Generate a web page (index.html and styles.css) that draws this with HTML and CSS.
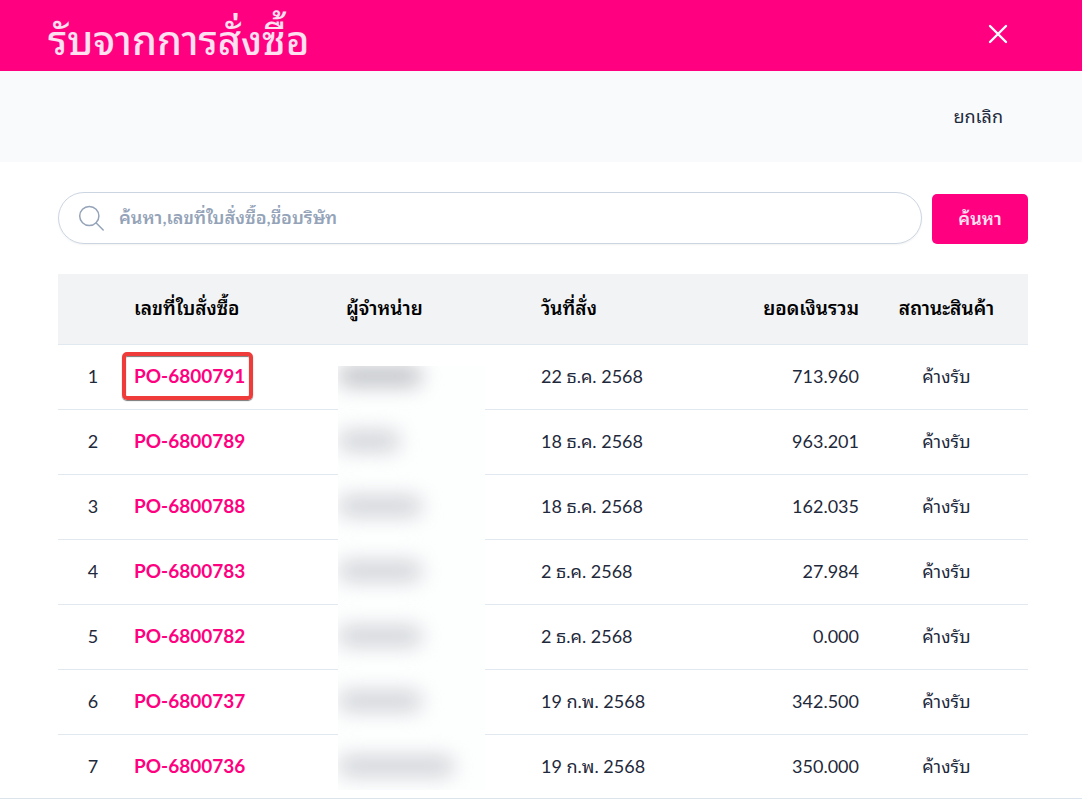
FILE: index.html
```
<!DOCTYPE html>
<html lang="th">
<head>
<meta charset="utf-8">
<title>รับจากการสั่งซื้อ</title>
<link rel="stylesheet" href="styles.css">
</head>
<body>
<div class="dialog">
<header class="titlebar">
  <h1 class="title">รับจากการสั่งซื้อ</h1>
  <button class="close" type="button" aria-label="ปิด"><svg width="20" height="20" viewBox="0 0 20 20" fill="none" stroke="currentColor" stroke-width="2.4" stroke-linecap="round"><path d="M2 2l16 16M18 2L2 18"/></svg></button>
</header>
<div class="actions"><button class="cancel" type="button">ยกเลิก</button></div>
<main class="content">
  <form class="search">
    <label class="search-box">
      <svg width="28" height="28" viewBox="0 0 28 28" fill="none" stroke="currentColor" stroke-width="1.5" stroke-linecap="round"><circle cx="11.3" cy="12" r="9.6"/><path d="M18.2 19l7 7"/></svg>
      <input class="search-input" type="text" aria-label="ค้นหา" placeholder="ค้นหา,เลขที่ใบสั่งซื้อ,ชื่อบริษัท">
    </label>
    <button class="search-button" type="button">ค้นหา</button>
  </form>
  <div class="orders-wrap">
    <table class="orders">
      <thead><tr><th class="num"></th><th class="code">เลขที่ใบสั่งซื้อ</th><th class="vendor">ผู้จำหน่าย</th><th class="date">วันที่สั่ง</th><th class="total">ยอดเงินรวม</th><th class="status">สถานะสินค้า</th></tr></thead>
      <tbody>
        <tr><td class="num">1</td><td><a class="po marked" href="#">PO-6800791</a></td><td></td><td>22 ธ.ค. 2568</td><td class="total">713.960</td><td class="status">ค้างรับ</td></tr>
        <tr><td class="num">2</td><td><a class="po" href="#">PO-6800789</a></td><td></td><td>18 ธ.ค. 2568</td><td class="total">963.201</td><td class="status">ค้างรับ</td></tr>
        <tr><td class="num">3</td><td><a class="po" href="#">PO-6800788</a></td><td></td><td>18 ธ.ค. 2568</td><td class="total">162.035</td><td class="status">ค้างรับ</td></tr>
        <tr><td class="num">4</td><td><a class="po" href="#">PO-6800783</a></td><td></td><td>2 ธ.ค. 2568</td><td class="total">27.984</td><td class="status">ค้างรับ</td></tr>
        <tr><td class="num">5</td><td><a class="po" href="#">PO-6800782</a></td><td></td><td>2 ธ.ค. 2568</td><td class="total">0.000</td><td class="status">ค้างรับ</td></tr>
        <tr><td class="num">6</td><td><a class="po" href="#">PO-6800737</a></td><td></td><td>19 ก.พ. 2568</td><td class="total">342.500</td><td class="status">ค้างรับ</td></tr>
        <tr><td class="num">7</td><td><a class="po" href="#">PO-6800736</a></td><td></td><td>19 ก.พ. 2568</td><td class="total">350.000</td><td class="status">ค้างรับ</td></tr>
      </tbody>
    </table>
    <div class="redaction" aria-hidden="true">
      <span class="smudge first"></span><span class="smudge short"></span><span class="smudge"></span><span class="smudge"></span><span class="smudge"></span><span class="smudge"></span><span class="smudge long"></span>
    </div>
  </div>
</main>
<footer class="footer"></footer>
</div>
</body>
</html>
```
FILE: styles.css
```
* { box-sizing: border-box; }
body {
  margin: 0;
  background: #fff;
  color: #1e293b;
  font: 18px/24px Lato, "Noto Sans Thai Looped", Loma, Waree, "Noto Sans Thai", "Noto Sans", sans-serif;
}
button, input { font: inherit; }
button { border: 0; padding: 0; background: none; cursor: pointer; }
.dialog { display: flex; flex-direction: column; height: 100vh; overflow: hidden; }
.titlebar {
  flex: none;
  display: flex;
  justify-content: space-between;
  height: 71px;
  padding: 0 74px 0 48px;
  background: #ff0080;
  color: #ffe0f0;
}
.title { margin: 0; padding-top: 13px; font-size: 40px; font-weight: 500; line-height: 54px; }
.close { width: 20px; height: 20px; margin-top: 24px; color: #fff; }
.close svg { display: block; }
.actions {
  flex: none;
  display: flex;
  align-items: center;
  justify-content: flex-end;
  height: 91px;
  padding: 0 79px 2px 0;
  background: #f8fafc;
}
.cancel { color: inherit; }
.content { flex: 1; min-height: 0; overflow: hidden; padding: 30px 54px 0 58px; }
.search { display: flex; align-items: flex-end; gap: 10px; margin-bottom: 30px; }
.search-box {
  flex: 1;
  display: flex;
  align-items: center;
  gap: 13px;
  height: 52px;
  padding: 0 20px 0 19px;
  border: 1px solid #cbd5e1;
  border-radius: 26px;
  box-shadow: 0 1px 2px #0000000d;
  color: #94a3b8;
}
.search-input { flex: 1; border: 0; outline: 0; padding: 0 0 2px; background: none; font-weight: 600; }
.search-input::placeholder { color: #94a3b8; opacity: 1; }
.search-button {
  width: 96px;
  height: 50px;
  padding-bottom: 2px;
  border-radius: 5px;
  background: #ff0080;
  color: #ffe0f0;
  font-weight: 600;
}
.orders-wrap { position: relative; }
.orders { width: 100%; border-collapse: separate; border-spacing: 0; table-layout: fixed; }
th, td { padding: 0 18px 2px; border-bottom: 1px solid #e2e8f0; text-align: left; white-space: nowrap; }
th { height: 71px; background: #f1f3f5; color: #000; font-size: 19px; font-weight: 600; }
td { height: 65px; }
.num { width: 58px; padding: 0 0 2px 12px; text-align: center; }
.code { width: 212px; }
.vendor { width: 195px; }
.total { text-align: right; }
th.status { width: 151px; }
.status { padding: 0 12px 2px 0; text-align: center; }
.po { color: #ff0080; font-size: 19px; font-weight: 700; text-decoration: none; }
.marked {
  display: inline-block;
  margin: 0 -12px;
  padding: 8px 4px 8px 8px;
  border: 4px solid #f03b3b;
  border-radius: 5px;
  box-shadow: 0 1px 1px #777, inset 0 1px 1px #777;
}
.redaction {
  position: absolute;
  top: 92px;
  left: 280px;
  width: 147px;
  height: 424px;
  overflow: hidden;
  background: #fdfefe;
}
.smudge {
  display: block;
  width: 84px;
  height: 20px;
  margin-bottom: 45px;
  border-radius: 10px;
  background: #d0d2d7;
  filter: blur(10px);
}
.smudge.first { background: #bfc1c6; }
.smudge.short { width: 62px; }
.smudge.long { width: 116px; }
.footer { flex: none; height: 2px; border-top: 1px solid #dbe3ec; background: #fff; }
```
